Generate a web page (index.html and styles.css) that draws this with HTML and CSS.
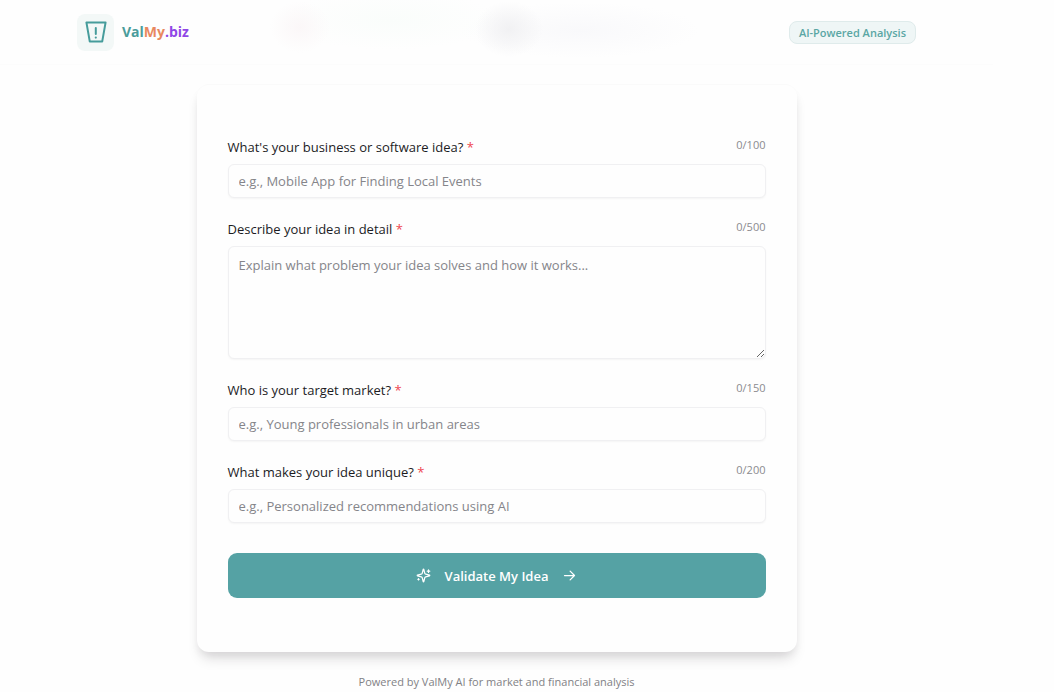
FILE: index.html
```html
<!DOCTYPE html>
<html lang="en">
<head>
<meta charset="utf-8">
<meta name="viewport" content="width=device-width, initial-scale=1">
<title>ValMy.biz</title>
<link rel="stylesheet" href="styles.css">
</head>
<body>
<header class="header">
  <div class="header-inner">
    <div class="brand">
      <span class="brand-mark">
        <svg width="22" height="22" viewBox="0 0 22 22" fill="none" stroke="currentColor" stroke-width="2" stroke-linejoin="round" stroke-linecap="round" aria-hidden="true">
          <path d="M1.4 1.4H20.6L17.2 20.6H4.8Z"/>
          <path d="M10.8 7V13"/>
          <path d="M10.8 16.5V16.6" stroke-width="2.2"/>
        </svg>
      </span>
      <span class="brand-name"><span class="teal">Val</span><span class="orange">My</span><span class="purple">.biz</span></span>
    </div>
    <span class="badge">AI-Powered Analysis</span>
  </div>
</header>
<main class="main">
  <form class="card">
    <div class="field">
      <div class="field-head"><label for="idea">What's your business or software idea? <span class="req">*</span></label><span class="count">0/100</span></div>
      <input class="control" id="idea" type="text" maxlength="100" placeholder="e.g., Mobile App for Finding Local Events">
    </div>
    <div class="field">
      <div class="field-head"><label for="detail">Describe your idea in detail <span class="req">*</span></label><span class="count">0/500</span></div>
      <textarea class="control area" id="detail" maxlength="500" placeholder="Explain what problem your idea solves and how it works..."></textarea>
    </div>
    <div class="field">
      <div class="field-head"><label for="market">Who is your target market? <span class="req">*</span></label><span class="count">0/150</span></div>
      <input class="control" id="market" type="text" maxlength="150" placeholder="e.g., Young professionals in urban areas">
    </div>
    <div class="field">
      <div class="field-head"><label for="unique">What makes your idea unique? <span class="req">*</span></label><span class="count">0/200</span></div>
      <input class="control" id="unique" type="text" maxlength="200" placeholder="e.g., Personalized recommendations using AI">
    </div>
    <button class="submit" type="submit">
      <svg width="15" height="15" viewBox="0 0 24 24" fill="none" stroke="currentColor" stroke-width="2" stroke-linecap="round" stroke-linejoin="round" aria-hidden="true">
        <path d="M9.937 15.5A2 2 0 0 0 8.5 14.063l-6.135-1.582a.5.5 0 0 1 0-.962L8.5 9.936A2 2 0 0 0 9.937 8.5l1.582-6.135a.5.5 0 0 1 .963 0L14.063 8.5A2 2 0 0 0 15.5 9.937l6.135 1.581a.5.5 0 0 1 0 .964L15.5 14.063a2 2 0 0 0-1.437 1.437l-1.582 6.135a.5.5 0 0 1-.963 0z"/>
        <path d="M20 3v4M22 5h-4M4 17v2M5 18H3"/>
      </svg>
      <span>Validate My Idea</span>
      <svg width="15" height="15" viewBox="0 0 24 24" fill="none" stroke="currentColor" stroke-width="2" stroke-linecap="round" stroke-linejoin="round" aria-hidden="true">
        <path d="M4 12h16M13 5l7 7-7 7"/>
      </svg>
    </button>
  </form>
  <p class="note">Powered by ValMy AI for market and financial analysis</p>
</main>
</body>
</html>
```
FILE: styles.css
```css
* {
  box-sizing: border-box;
}

body {
  margin: 0;
  padding-right: 61px;
  background: #fefefe;
  color: #1c1c1f;
  font-family: "Segoe UI", "Open Sans", "Noto Sans", sans-serif;
  font-size: 13px;
}

.header {
  border-bottom: 1px solid #fcfcfc;
  background:
    radial-gradient(30px 26px at 300px 27px, #fbf7f8, transparent),
    radial-gradient(34px 28px at 509px 29px, #f1f1f3, transparent),
    radial-gradient(110px 30px at 390px 20px, #fafdfb, transparent),
    radial-gradient(120px 28px at 580px 30px, #f9f9fb, transparent);
}

.header-inner {
  display: flex;
  align-items: center;
  justify-content: space-between;
  max-width: 839px;
  height: 64px;
  margin: 0 auto;
}

.brand {
  display: flex;
  align-items: center;
  gap: 8px;
}

.brand-mark {
  display: grid;
  place-items: center;
  width: 37px;
  height: 37px;
  border-radius: 8px;
  background: #f3f8f7;
  color: #469c9b;
}

.brand-name {
  font-size: 14px;
  font-weight: 700;
  line-height: 18px;
}

.teal {
  color: #4a9c9b;
}

.orange {
  color: #e8885f;
}

.purple {
  color: #9047e6;
}

.badge {
  padding: 2px 9px;
  border: 1px solid #dfebeb;
  border-radius: 8px;
  background: #eff6f6;
  color: #5aa6a4;
  font-size: 11px;
  font-weight: 600;
  line-height: 17px;
}

.main {
  max-width: 600px;
  margin: 0 auto;
  padding-top: 19px;
}

.card {
  padding: 53px 31px 54px;
  border-top: 1px solid #fafafa;
  border-radius: 12px;
  background: #fefefe;
  box-shadow: 0 10px 14px -4px rgba(30, 20, 30, 0.14), 0 5px 8px -2px rgba(30, 20, 30, 0.07);
}

.field {
  margin-bottom: 22px;
}

.field-head {
  display: flex;
  justify-content: space-between;
  margin-bottom: 8px;
  line-height: 18px;
}

.field-head label {
  font-weight: 500;
}

.req {
  color: #ef4650;
}

.count {
  color: #8b8b8f;
  font-size: 11px;
  line-height: 14px;
}

.control {
  display: block;
  width: 100%;
  height: 34px;
  padding: 6px 10px;
  border: 1px solid #f0f0f2;
  border-radius: 6px;
  background: #fefefe;
  color: inherit;
  font: inherit;
  line-height: 20px;
  box-shadow: 0 1px 2px rgba(0, 0, 0, 0.04);
}

.control::placeholder {
  color: #85858a;
  opacity: 1;
}

.area {
  height: 113px;
  padding-top: 8px;
  resize: vertical;
}

.submit {
  display: flex;
  align-items: center;
  justify-content: center;
  gap: 14px;
  width: 100%;
  height: 45px;
  margin-top: 30px;
  border: 0;
  border-radius: 9px;
  background: #55a2a4;
  color: #fff;
  font: inherit;
  font-weight: 600;
}

.note {
  margin: 22px 0 0;
  color: #818185;
  font-size: 11px;
  line-height: 16px;
  text-align: center;
}
```
